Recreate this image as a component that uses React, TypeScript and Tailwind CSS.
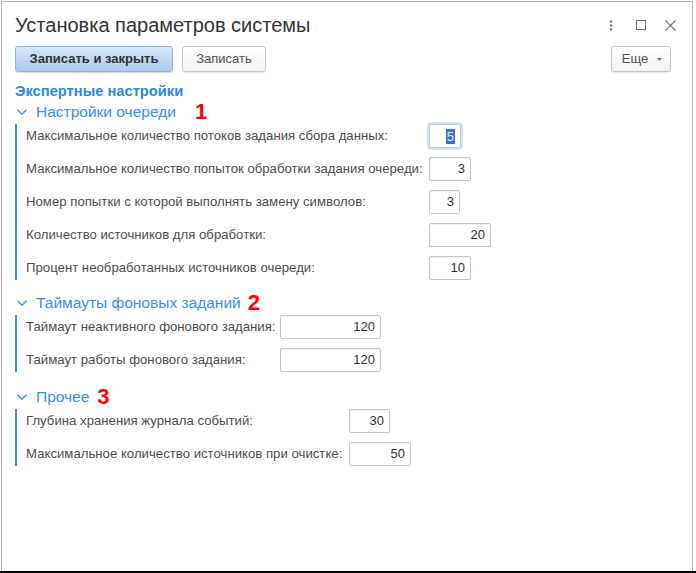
import React from "react";

type Field = { label: string; value: string; width: number; focused?: boolean };

type Group = {
  title: string;
  mark: string;
  markGap: string;
  labelWidth: string;
  top: string;
  fields: Field[];
};

const GROUPS: Group[] = [
  {
    title: "Настройки очереди",
    mark: "1",
    markGap: "ml-[19px]",
    labelWidth: "w-[403px]",
    top: "mt-[2px]",
    fields: [
      { label: "Максимальное количество потоков задания сбора данных:", value: "5", width: 32, focused: true },
      { label: "Максимальное количество попыток обработки задания очереди:", value: "3", width: 42 },
      { label: "Номер попытки с которой выполнять замену символов:", value: "3", width: 31 },
      { label: "Количество источников для обработки:", value: "20", width: 62 },
      { label: "Процент необработанных источников очереди:", value: "10", width: 42 },
    ],
  },
  {
    title: "Таймауты фоновых заданий",
    mark: "2",
    markGap: "ml-[7px]",
    labelWidth: "w-[254px]",
    top: "mt-[13px]",
    fields: [
      { label: "Таймаут неактивного фонового задания:", value: "120", width: 101 },
      { label: "Таймаут работы фонового задания:", value: "120", width: 101 },
    ],
  },
  {
    title: "Прочее",
    mark: "3",
    markGap: "ml-[8px]",
    labelWidth: "w-[323px]",
    top: "mt-[15px]",
    fields: [
      { label: "Глубина хранения журнала событий:", value: "30", width: 41 },
      { label: "Максимальное количество источников при очистке:", value: "50", width: 62 },
    ],
  },
];

function Chevron() {
  return (
    <svg width="10" height="6" viewBox="0 0 10 6" fill="none" stroke="#3b8ee6" strokeWidth="1.4">
      <path d="M0.5 0.8l4.5 4.4 4.5-4.4" />
    </svg>
  );
}

function NumberInput({ field }: { field: Field }) {
  if (field.focused) {
    return (
      <div
        className="h-[24px] rounded-[2px] border border-[#a9cdf2] ring-2 ring-[#d3e6f9] bg-white flex items-center justify-end pr-[5px] text-[13px] text-[#333]"
        style={{ width: field.width }}
      >
        <span className="bg-[#3c6fd4] text-[#dbe6ff] leading-[15px] px-[1px]">{field.value}</span>
      </div>
    );
  }
  return (
    <div
      className="h-[24px] rounded-[2px] border border-[#c6c6c6] bg-white shadow-[inset_0_1px_1px_rgba(0,0,0,0.06)] flex items-center justify-end pr-[5px] text-[13px] text-[#333]"
      style={{ width: field.width }}
    >
      {field.value}
    </div>
  );
}

function SettingsGroup({ group }: { group: Group }) {
  return (
    <div className={group.top}>
      <div className="flex items-center h-[20px]">
        <span className="ml-[2px] flex">
          <Chevron />
        </span>
        <span className="ml-[9px] text-[15.5px] text-[#3b8ee6]">{group.title}</span>
        <span className={`${group.markGap} text-[22px] font-bold leading-[20px] text-[#ff0000]`}>{group.mark}</span>
      </div>
      <div className="mt-[2px] border-l-2 border-[#3b8ee6] pl-[9px] flex flex-col gap-[9px]">
        {group.fields.map((f) => (
          <div key={f.label} className="flex items-center h-[24px]">
            <span className={`${group.labelWidth} shrink-0 text-[13.2px] text-[#4d4d4d] whitespace-nowrap`}>{f.label}</span>
            <NumberInput field={f} />
          </div>
        ))}
      </div>
    </div>
  );
}

export default function App() {
  return (
    <div className="w-[696px] h-[573px] bg-white pl-[1px] pr-[3px] pt-[1px] border-b-2 border-black font-['Liberation_Sans',Arial,sans-serif]">
      <div className="h-full border border-b-0 border-[#b4b4b4] pl-[13px] pr-[21px] pt-[11px]">
        {/* title bar */}
        <div className="flex items-center justify-between h-[24px]">
          <h1 className="text-[20px] leading-[24px] text-[#333]">Установка параметров системы</h1>
          <div className="flex items-center mr-[-5px]">
            <svg width="4" height="11" viewBox="0 0 4 11" fill="#7a7a7a">
              <circle cx="2" cy="1.5" r="1.3" />
              <circle cx="2" cy="5.5" r="1.3" />
              <circle cx="2" cy="9.5" r="1.3" />
            </svg>
            <svg className="ml-[23px]" width="10" height="10" viewBox="0 0 10 10" fill="none" stroke="#6e6e6e" strokeWidth="1">
              <rect x="0.5" y="0.5" width="9" height="9" />
            </svg>
            <svg className="ml-[19px]" width="11" height="11" viewBox="0 0 11 11" fill="none" stroke="#7a7a7a" strokeWidth="1.2">
              <path d="M0.5 0.5l10 10M10.5 0.5l-10 10" />
            </svg>
          </div>
        </div>

        {/* command bar */}
        <div className="flex items-center mt-[9px]">
          <button className="h-[26px] w-[158px] rounded-[3px] border border-[#93b5dc] bg-gradient-to-b from-[#d6e7f9] to-[#abcaed] shadow-[0_1px_1px_rgba(0,0,0,0.15)] text-[13px] font-bold text-[#333]">
            Записать и закрыть
          </button>
          <button className="ml-[9px] h-[26px] w-[84px] rounded-[3px] border border-[#c6c6c6] bg-gradient-to-b from-white to-[#f1f1f1] shadow-[0_1px_1px_rgba(0,0,0,0.08)] text-[13px] text-[#555]">
            Записать
          </button>
          <button className="ml-auto h-[26px] w-[60px] rounded-[3px] border border-[#c6c6c6] bg-gradient-to-b from-white to-[#f1f1f1] shadow-[0_1px_1px_rgba(0,0,0,0.08)] text-[13px] text-[#555] flex items-center justify-center gap-[9px] pl-[2px]">
            Еще
            <svg width="5" height="3" viewBox="0 0 5 3" fill="#777">
              <path d="M0 0h5L2.5 3z" />
            </svg>
          </button>
        </div>

        <div className="mt-[10px] text-[14.7px] leading-[18px] font-bold text-[#2f88e0]">Экспертные настройки</div>

        <div>
          {GROUPS.map((g) => (
            <SettingsGroup key={g.title} group={g} />
          ))}
        </div>
      </div>
    </div>
  );
}
